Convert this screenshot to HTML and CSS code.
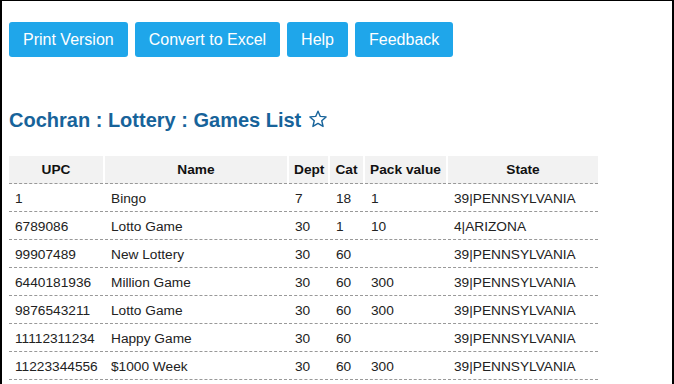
FILE: index.html
```html
<!DOCTYPE html>
<html lang="en">
<head>
  <meta charset="UTF-8" />
  <meta name="viewport" content="width=device-width, initial-scale=1.0" />
  <title>Games List</title>
  <link rel="stylesheet" href="styles.css">
</head>
<body>
  <div class="frame">
    <!-- Toolbar buttons -->
    <div class="toolbar">
      <button class="btn">Print Version</button>
      <button class="btn">Convert to Excel</button>
      <button class="btn">Help</button>
      <button class="btn">Feedback</button>
    </div>
    <!-- Page title -->
    <h1 class="title">Cochran : Lottery : Games List
      <svg class="star" width="20" height="20" viewBox="0 0 24 24"><path d="M12 2.6l2.8 6.3 6.9.6-5.2 4.6 1.6 6.8L12 17.3l-6.1 3.6 1.6-6.8-5.2-4.6 6.9-.6z" fill="none" stroke="#17639a" stroke-width="1.7" stroke-linejoin="round"/></svg>
    </h1>
    <!-- Games table -->
    <table class="games">
      <colgroup>
        <col style="width:94px"><col style="width:182px"><col style="width:39px"><col style="width:33px"><col style="width:81px"><col style="width:150px">
      </colgroup>
      <thead>
        <tr><th>UPC</th><th>Name</th><th>Dept</th><th>Cat</th><th>Pack value</th><th>State</th></tr>
      </thead>
      <tbody>
        <tr><td>1</td><td>Bingo</td><td>7</td><td>18</td><td>1</td><td>39|PENNSYLVANIA</td></tr>
        <tr><td>6789086</td><td>Lotto Game</td><td>30</td><td>1</td><td>10</td><td>4|ARIZONA</td></tr>
        <tr><td>99907489</td><td>New Lottery</td><td>30</td><td>60</td><td></td><td>39|PENNSYLVANIA</td></tr>
        <tr><td>6440181936</td><td>Million Game</td><td>30</td><td>60</td><td>300</td><td>39|PENNSYLVANIA</td></tr>
        <tr><td>9876543211</td><td>Lotto Game</td><td>30</td><td>60</td><td>300</td><td>39|PENNSYLVANIA</td></tr>
        <tr><td>11112311234</td><td>Happy Game</td><td>30</td><td>60</td><td></td><td>39|PENNSYLVANIA</td></tr>
        <tr><td>11223344556</td><td>$1000 Week</td><td>30</td><td>60</td><td>300</td><td>39|PENNSYLVANIA</td></tr>
      </tbody>
    </table>
  </div>
</body>
</html>
```

FILE: styles.css
```css
/* Page frame */
body { margin: 0; font-family: "Liberation Sans", Arial, sans-serif; color: #333; background: #fff; }
.frame { box-sizing: border-box; width: 674px; height: 384px; overflow: hidden; border: 1px solid #000; border-left-width: 2px; border-right-width: 2px; border-bottom: none; padding: 21px 0 0 7px; }

/* Toolbar */
.toolbar { display: flex; gap: 7px; }
.btn { font-family: inherit; font-size: 16px; color: #fff; background: #1fa6ea; border: none; border-radius: 3px; height: 35px; padding: 0 14px; }

/* Title */
.title { display: flex; align-items: center; gap: 7px; margin: 51px 0 0; font-size: 20px; line-height: 24px; color: #17639a; }
.star { margin-top: -2px; }

/* Table */
.games { table-layout: fixed; width: 593px; border-collapse: separate; border-spacing: 2px 0; margin: 24px 0 0 -2px; font-size: 13.7px; }
.games th, .games td { border-bottom: 1px dashed #999; height: 28px; padding: 0 5px; box-sizing: border-box; line-height: 17px; white-space: nowrap; }
.games th { background: #f2f2f2; color: #111; font-weight: bold; text-align: center; }
.games td { text-align: left; padding: 2px 5px 0 6px; color: #222; }
```
